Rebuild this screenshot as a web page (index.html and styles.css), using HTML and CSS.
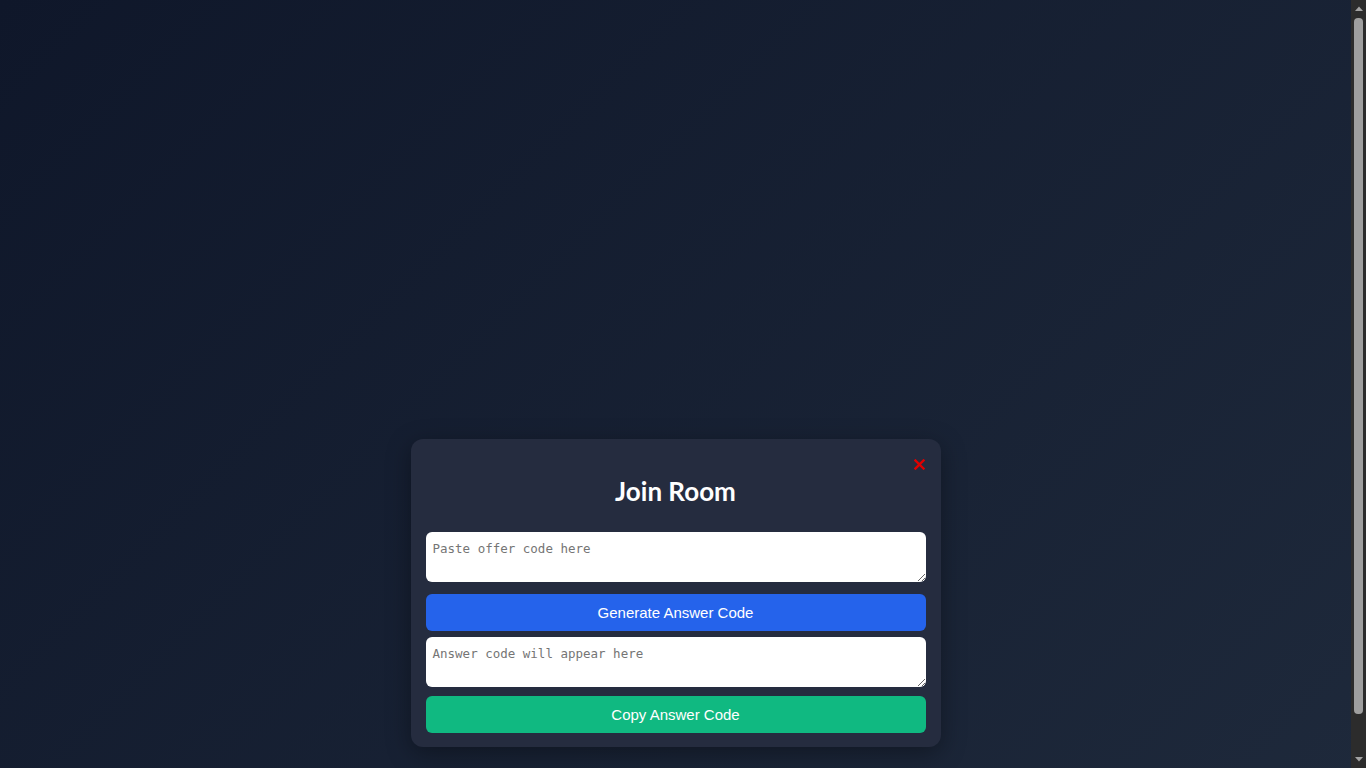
FILE: index.html
```html
<!DOCTYPE html>
<html lang="en">
<head>
<meta charset="utf-8">
<title>Join Room</title>
<link rel="stylesheet" href="styles.css">
</head>
<body>
<div class="window">
  <div class="page">
    <div class="app">
      <div class="stage"></div>
      <div class="modal">
        <button class="close" aria-label="Close">
          <svg width="11" height="11" viewBox="0 0 11 11"><path d="M1.5 1.5 L9.5 9.5 M9.5 1.5 L1.5 9.5" stroke="#e00000" stroke-width="2.4" stroke-linecap="square"/></svg>
        </button>
        <h2 class="title">Join Room</h2>
        <textarea class="code code-offer" placeholder="Paste offer code here"></textarea>
        <button class="btn btn-blue">Generate Answer Code</button>
        <textarea class="code code-answer" placeholder="Answer code will appear here" readonly></textarea>
        <button class="btn btn-green">Copy Answer Code</button>
      </div>
    </div>
  </div>
  <div class="scrollbar" aria-hidden="true">
    <div class="sb-btn"><svg width="8" height="5" viewBox="0 0 8 5"><path d="M0 5 L4 0.5 L8 5 Z" fill="#a3a3a3"/></svg></div>
    <div class="sb-track"><div class="sb-thumb"></div></div>
    <div class="sb-btn"><svg width="8" height="5" viewBox="0 0 8 5"><path d="M0 0 L4 4.5 L8 0 Z" fill="#a3a3a3"/></svg></div>
  </div>
</div>
</body>
</html>
```
FILE: styles.css
```css
html,
body {
  margin: 0;
  height: 100%;
  overflow: hidden;
}
body {
  font-family: "Liberation Sans", Arial, sans-serif;
  background: #161e30;
}
.window {
  display: flex;
  height: 100vh;
}
.page {
  flex: 1;
  overflow: hidden;
}
.app {
  min-height: 810px;
  background: linear-gradient(135deg, #0f172a 0%, #1e293b 100%);
  display: flex;
  flex-direction: column;
  align-items: center;
}
.stage {
  height: 439px;
}
.modal {
  position: relative;
  width: 500px;
  padding: 15px 15px 14px;
  background: #252c3f;
  border-radius: 12px;
  box-shadow: 0 6px 24px rgba(0, 0, 0, 0.35);
  display: flex;
  flex-direction: column;
}
.close {
  position: absolute;
  top: 18px;
  right: 14px;
  width: 14px;
  height: 14px;
  padding: 0;
  border: 0;
  background: transparent;
  display: flex;
  align-items: center;
  justify-content: center;
  cursor: pointer;
}
.title {
  margin: 23px 0 26px;
  text-align: center;
  font-family: Lato, "Open Sans", sans-serif;
  font-weight: 700;
  font-size: 26px;
  line-height: 29px;
  color: #ffffff;
}
.code {
  display: block;
  box-sizing: border-box;
  width: 500px;
  height: 50px;
  padding: 9px 7px 7px;
  border: 0;
  border-radius: 6px;
  background: #ffffff;
  color: #111111;
  color-scheme: light;
  font-family: "DejaVu Sans Mono", "Liberation Mono", monospace;
  font-size: 12.5px;
  line-height: 16px;
  resize: vertical;
  outline: none;
}
.code::placeholder {
  color: #757575;
}
.btn {
  display: block;
  width: 500px;
  height: 37px;
  border: 0;
  border-radius: 6px;
  color: #ffffff;
  font-family: "Liberation Sans", Arial, sans-serif;
  font-size: 15px;
  cursor: pointer;
}
.btn-blue {
  background: #2563eb;
  margin: 12px 0 6px;
}
.btn-green {
  background: #10b981;
  margin-top: 9px;
}
.scrollbar {
  width: 15px;
  flex: none;
  background: #2c2c2c;
  display: flex;
  flex-direction: column;
}
.sb-btn {
  height: 17px;
  display: flex;
  align-items: center;
  justify-content: center;
}
.sb-track {
  flex: 1;
  display: flex;
  flex-direction: column;
  padding: 1px 3px 37px 3px;
}
.sb-thumb {
  height: 696px;
  border-radius: 4px;
  background: #9f9f9f;
}
```
